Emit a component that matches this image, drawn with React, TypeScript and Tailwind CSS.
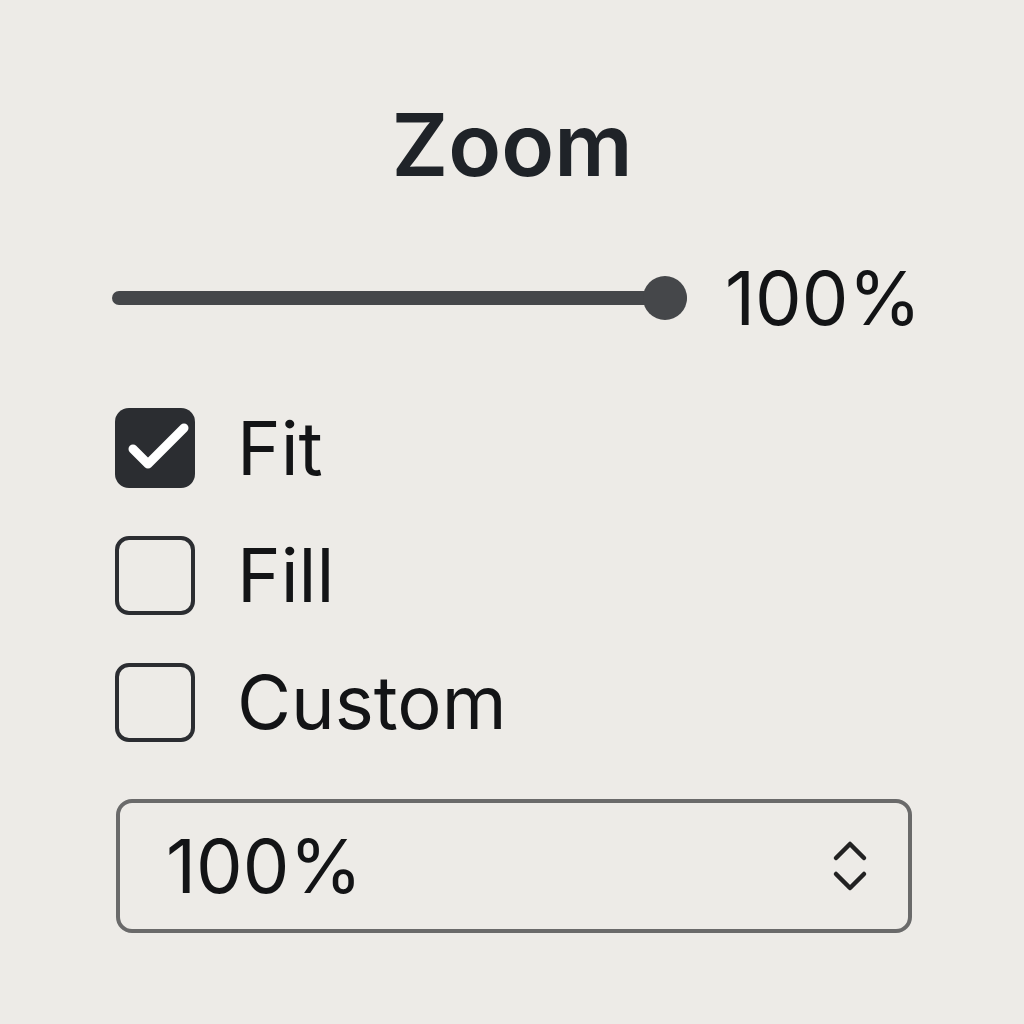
import React from "react";

function Check({ checked }: { checked?: boolean }) {
  if (checked) {
    return (
      <div className="w-[80px] h-[80px] rounded-[14px] bg-[#2b2d31] shrink-0">
        <svg width="80" height="80" viewBox="0 0 80 80" fill="none">
          <path d="M18 41 L33 56 L69 20" stroke="#ffffff" strokeWidth="9" strokeLinecap="round" strokeLinejoin="round" />
        </svg>
      </div>
    );
  }
  return <div className="w-[80px] h-[79px] rounded-[14px] border-[4px] border-[#2b2d31] shrink-0" />;
}

export default function App() {
  return (
    <div className="w-[1024px] h-[1024px] bg-[#edebe7] text-[#131416] flex flex-col" style={{ fontFamily: "Inter, 'Noto Sans', sans-serif" }}>
      <div className="mt-[101px] text-center text-[87px] leading-[88px] font-semibold text-[#1f2328]">Zoom</div>
      <div className="mt-[79px] ml-[112px] flex items-center h-[60px]">
        <div className="relative w-[575px] h-[44px] flex items-center">
          <div className="w-full h-[14px] rounded-full bg-[#45474a]" />
          <div className="absolute right-0 top-0 w-[44px] h-[44px] rounded-full bg-[#45474a]" />
        </div>
        <div className="ml-[38px] text-[74px] leading-[60px] font-normal">100%</div>
      </div>
      <div className="mt-[80px] ml-[115px] flex flex-col gap-[47px]">
        <div className="flex items-center gap-[42px]">
          <Check checked />
          <span className="text-[74px] leading-[80px]">Fit</span>
        </div>
        <div className="flex items-center gap-[42px]">
          <Check />
          <span className="text-[74px] leading-[80px]">Fill</span>
        </div>
        <div className="flex items-center gap-[42px]">
          <Check />
          <span className="text-[74px] leading-[80px]">Custom</span>
        </div>
      </div>
      <div className="mt-[57px] ml-[116px] w-[796px] h-[134px] rounded-[16px] border-[4px] border-[#6a6a6a] flex items-center justify-between pl-[46px] pr-[38px]">
        <span className="text-[74px] leading-[80px]">100%</span>
        <svg width="40" height="60" viewBox="0 0 40 60" fill="none">
          <path d="M6 22 L20 8 L34 22" stroke="#222" strokeWidth="4.5" strokeLinecap="round" strokeLinejoin="round" />
          <path d="M6 38 L20 52 L34 38" stroke="#222" strokeWidth="4.5" strokeLinecap="round" strokeLinejoin="round" />
        </svg>
      </div>
    </div>
  );
}
